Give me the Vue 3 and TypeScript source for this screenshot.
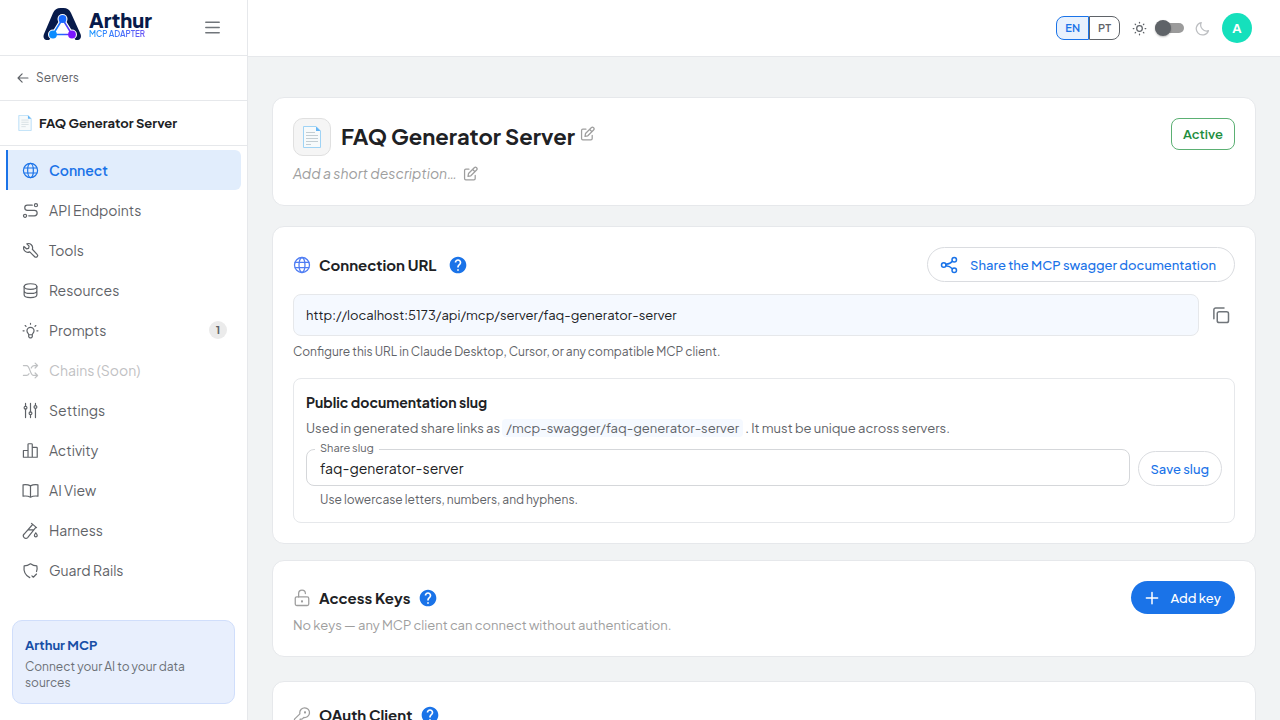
<script setup lang="ts">
import { ref } from 'vue'

interface NavItem {
  label: string
  icon: string
  active?: boolean
  disabled?: boolean
  count?: number
}

const icons: Record<string, string[]> = {
  globe: [
    'M2 12a10 10 0 1 0 20 0a10 10 0 1 0-20 0',
    'M8 12c0 5.5 1.8 10 4 10s4-4.500 4-10s-1.800-10-4-10s-4 4.500-4 10',
    'M3 8.500h18M3 15.500h18',
  ],
  route: [
    'M17.500 4.500a2.200 2.200 0 1 0 4.400 0a2.200 2.200 0 1 0-4.400 0',
    'M2.100 19.500a2.200 2.200 0 1 0 4.400 0a2.200 2.200 0 1 0-4.400 0',
    'M14.500 4.500H7.500a3.600 3.600 0 0 0 0 7.200h10a3.900 3.900 0 0 1 0 7.800H9.500',
  ],
  tool: [
    'M2.700 6.300l3.600 3.300l3-.7l.7-3l-3.200-3.300a6 6 0 0 1 7.800 7.600l6.700 7.200a2.300 2.300 0 0 1-3.400 3.400l-7-6.900a6 6 0 0 1-8.200-7.600z',
  ],
  database: [
    'M3 6.500C3 4 7 2.500 12 2.500s9 1.500 9 4s-4 4-9 4s-9-1.500-9-4z',
    'M3 6.500v11.500c0 2.500 4 4 9 4s9-1.500 9-4V6.500M3 12.200c0 2.500 4 4 9 4s9-1.500 9-4',
  ],
  bulb: [
    'M9.500 18c0-1.500-2.500-2.500-2.500-5.500a5 5 0 1 1 10 0c0 3-2.500 4-2.500 5.500v3l-1.500 1.500h-2l-1.500-1.500zM9.500 18h5',
    'M12 2v1.200M4.500 5l1.200 1.200M19.500 5l-1.200 1.200M1.500 12.500h1.500M21 12.500h1.500',
  ],
  shuffle: [
    'M2 5h4.500c5 0 4.500 14 10 14H22M18.500 15.500L22 19l-3.500 3.500',
    'M2 19h4.500c1.500 0 2.600-1 3.400-2.500M13 8.500C13.800 6.500 15 5 17 5h5M18.500 1.500L22 5l-3.500 3.500',
  ],
  sliders: [
    'M5 2v4M5 10v12M12 2v12M12 18v4M19 10v12M19 2v2',
    'M3 8a2 2 0 1 0 4 0a2 2 0 1 0-4 0M10 16a2 2 0 1 0 4 0a2 2 0 1 0-4 0M17 7a2 2 0 1 0 4 0a2 2 0 1 0-4 0',
  ],
  chart: ['M2 12h6.500v9.500H2zM8.500 3.500q0-1 1-1h4q1 0 1 1v18h-6zM14.500 7.500h6q1 0 1 1v13h-7z'],
  book: ['M12 5.500C9 3.800 5.500 3.500 1.500 4v16c4-.5 7.500-.2 10.500 1.500c3-1.700 6.500-2 10.500-1.500V4c-4-.5-7.500-.2-10.500 1.500zV21'],
  tube: [
    'M13.500 2l7 6M15 3.500L3 17a3.500 3.500 0 0 0 5 5L19.500 7.500M8.500 11h7.500',
    'M19.500 15.500c1.500 1.800 2 2.500 2 3.500a2 2 0 0 1-4 0c0-1 .5-1.700 2-3.500',
  ],
  shield: [
    'M20.500 13.500C21.500 11 21.500 8 21 5.500c-3 0-6-.8-9-3c-3 2.200-6 3-9 3C2 13 4.500 19 11 22',
    'M14 19.500l2 2l4.500-4.500',
  ],
  edit: [
    'M9.500 5H4.500a2 2 0 0 0-2 2v13a2 2 0 0 0 2 2h13a2 2 0 0 0 2-2v-5',
    'M8 16.500l.8-4.500L18 2.800a2.600 2.600 0 0 1 3.700 3.700L12.500 15.700zM15.500 5.500L19 9',
  ],
  share: [
    'M2 12a3 3 0 1 0 6 0a3 3 0 1 0-6 0M16 5a3 3 0 1 0 6 0a3 3 0 1 0-6 0M16 19a3 3 0 1 0 6 0a3 3 0 1 0-6 0',
    'M8 11q6-.5 8.500-4M8 13q5 .5 8.500 4',
  ],
  copy: [
    'M9.500 7.500h10a2.500 2.500 0 0 1 2.500 2.500v9.500a2.500 2.500 0 0 1-2.500 2.500h-10a2.500 2.500 0 0 1-2.500-2.500V10a2.500 2.500 0 0 1 2.500-2.500z',
    'M2.500 17V5a2.500 2.500 0 0 1 2.500-2.500h11',
  ],
  unlock: [
    'M5 10.500h14a2 2 0 0 1 2 2v7.500a2 2 0 0 1-2 2H5a2 2 0 0 1-2-2v-7.500a2 2 0 0 1 2-2z',
    'M7.500 10.500V6a4.500 4.500 0 0 1 9 0M11.500 16h1v1h-1z',
  ],
  key: [
    'M9 9a6.500 6.500 0 1 1 5.500 6.300L12 17.500H9.500V20H7v2H2v-4.500l7.200-7z',
    'M15.500 8h1v1h-1z',
  ],
  plus: ['M12 4.500v15M4.500 12h15'],
  back: ['M20.500 12H3.500M10.500 5l-7 7l7 7'],
  menu: ['M2.500 4.500h19M2.500 12h19M2.500 19.500h19'],
  sun: [
    'M7.500 12a4.500 4.500 0 1 0 9 0a4.500 4.500 0 1 0-9 0',
    'M12 2v1M12 21v1M2 12h1M21 12h1M5 5l.7.7M18.300 18.300l.7.7M5 19l.7-.7M18.300 5.700l.7-.7',
  ],
  moon: ['M10 2.500A10 10 0 1 0 21.500 15.500A9.500 9.500 0 0 1 10 2.500z'],
}

const nav: NavItem[] = [
  { label: 'Connect', icon: 'globe', active: true },
  { label: 'API Endpoints', icon: 'route' },
  { label: 'Tools', icon: 'tool' },
  { label: 'Resources', icon: 'database' },
  { label: 'Prompts', icon: 'bulb', count: 1 },
  { label: 'Chains (Soon)', icon: 'shuffle', disabled: true },
  { label: 'Settings', icon: 'sliders' },
  { label: 'Activity', icon: 'chart' },
  { label: 'AI View', icon: 'book' },
  { label: 'Harness', icon: 'tube' },
  { label: 'Guard Rails', icon: 'shield' },
]

const helpPath =
  'M12 2C6.480 2 2 6.480 2 12s4.480 10 10 10 10-4.480 10-10S17.520 2 12 2m1 17h-2v-2h2zm2.070-7.750-.9.920C13.450 12.900 13 13.500 13 15h-2v-.5c0-1.100.450-2.100 1.170-2.830l1.240-1.260c.370-.360.590-.860.590-1.410 0-1.100-.9-2-2-2s-2 .9-2 2H8c0-2.210 1.790-4 4-4s4 1.790 4 4c0 .880-.360 1.680-.930 2.250'

const slug = ref('faq-generator-server')
const lang = ref('EN')
const dark = ref(false)
</script>

<template>
  <div class="shell">
    <aside class="sidebar">
      <div class="brand-row">
        <div class="brand">
          <svg class="mark" viewBox="0 0 38 32" aria-hidden="true">
            <defs>
              <linearGradient id="net" x1="9" y1="0" x2="29" y2="0" gradientUnits="userSpaceOnUse">
                <stop offset="0" stop-color="#0a8cff" />
                <stop offset=".5" stop-color="#2563ff" />
                <stop offset="1" stop-color="#7b16ff" />
              </linearGradient>
            </defs>
            <path d="M3 32C0 31.500-.5 28.500.5 26L9.500 5C11 1.500 13.500 0 17 0h3c3.500 0 6 1.500 7.500 5l9.500 21c1 2.500.5 5.500-2.500 6z" fill="#071a4a" />
            <path d="M19 11L9.500 26.500h19z" fill="#fff" stroke="#fff" stroke-width="4" stroke-linejoin="round" />
            <path d="M5 33h28l-5-6H9z" fill="#fff" />
            <circle cx="19" cy="11" r="5" fill="#fff" />
            <circle cx="9.500" cy="26.500" r="5" fill="#fff" />
            <circle cx="28.500" cy="26.500" r="5" fill="#fff" />
            <path d="M19 11L9.500 26.500h19z" fill="none" stroke="url(#net)" stroke-width="1.600" />
            <circle cx="19" cy="11" r="3.900" fill="#1769ff" />
            <circle cx="9.500" cy="26.500" r="3.900" fill="#0a8cff" />
            <circle cx="28.500" cy="26.500" r="3.900" fill="#7b16ff" />
          </svg>
          <div class="brand-text">
            <span class="brand-name">Arthur</span>
            <span class="brand-sub">MCP ADAPTER</span>
          </div>
        </div>
        <button class="icon-btn menu-btn" type="button" aria-label="Toggle menu">
          <svg class="ic ic17" viewBox="0 0 24 24"><path v-for="d in icons.menu" :key="d" :d="d" /></svg>
        </button>
      </div>

      <a class="back-row" href="#servers">
        <svg class="ic ic14" viewBox="0 0 24 24"><path v-for="d in icons.back" :key="d" :d="d" /></svg>
        <span>Servers</span>
      </a>

      <div class="server-row">
        <svg class="page-sm" viewBox="0 0 18 22" aria-hidden="true">
          <path d="M.5.500h12.500l4.500 4.500v16.500H.5z" fill="#f7fafb" stroke="#a5d6f5" />
          <path d="M13 .5v4.500h4.500z" fill="#64b5f6" />
          <path d="M4 7h10M4 10h10M4 13h10M4 16h6" stroke="#cfd8dc" />
        </svg>
        <strong>FAQ Generator Server</strong>
      </div>

      <nav class="nav">
        <a
          v-for="item in nav"
          :key="item.label"
          :href="item.disabled ? undefined : '#' + item.icon"
          class="nav-item"
          :class="{ active: item.active, disabled: item.disabled }"
        >
          <svg class="ic ic17" viewBox="0 0 24 24"><path v-for="d in icons[item.icon]" :key="d" :d="d" /></svg>
          <span class="nav-label">{{ item.label }}</span>
          <span v-if="item.count" class="count">{{ item.count }}</span>
        </a>
      </nav>

      <div class="promo">
        <strong>Arthur MCP</strong>
        <p>Connect your AI to your data sources</p>
      </div>
    </aside>

    <div class="body">
      <header class="topbar">
        <div class="lang">
          <button type="button" :class="{ on: lang === 'EN' }" @click="lang = 'EN'">EN</button>
          <button type="button" :class="{ on: lang === 'PT' }" @click="lang = 'PT'">PT</button>
        </div>
        <div class="theme">
          <svg class="ic ic15 sun" viewBox="0 0 24 24"><path v-for="d in icons.sun" :key="d" :d="d" /></svg>
          <input v-model="dark" class="switch" type="checkbox" aria-label="Dark mode" />
          <svg class="ic ic15 moon" viewBox="0 0 24 24"><path v-for="d in icons.moon" :key="d" :d="d" /></svg>
        </div>
        <button class="avatar" type="button">A</button>
      </header>

      <main class="content">
        <section class="card intro">
          <div class="intro-top">
            <div class="page-tile">
              <svg class="page-lg" viewBox="0 0 18 22" aria-hidden="true">
                <path d="M.5.500h12.500l4.500 4.500v16.500H.5z" fill="#f7fafb" stroke="#9fd3f5" />
                <path d="M13 .5v4.500h4.500z" fill="#64b5f6" />
                <path d="M3 6.500h9M3 9.500h12M3 12.500h12M3 15.500h12M3 18.500h5" stroke="#c3cdd2" />
              </svg>
            </div>
            <h1>FAQ Generator Server</h1>
            <button class="icon-btn title-edit" type="button" aria-label="Edit name">
              <svg class="ic ic15" viewBox="0 0 24 24"><path v-for="d in icons.edit" :key="d" :d="d" /></svg>
            </button>
            <span class="status">Active</span>
          </div>
          <div class="intro-desc">
            <em>Add a short description…</em>
            <button class="icon-btn" type="button" aria-label="Edit description">
              <svg class="ic ic15" viewBox="0 0 24 24"><path v-for="d in icons.edit" :key="d" :d="d" /></svg>
            </button>
          </div>
        </section>

        <section class="card connection">
          <div class="card-head">
            <svg class="ic ic18 blue-soft" viewBox="0 0 24 24"><path v-for="d in icons.globe" :key="d" :d="d" /></svg>
            <h2>Connection URL</h2>
            <button class="icon-btn help wide-help" type="button" aria-label="Help">
              <svg viewBox="0 0 24 24"><path :d="helpPath" /></svg>
            </button>
            <button class="pill share" type="button">
              <svg class="ic ic18" viewBox="0 0 24 24"><path v-for="d in icons.share" :key="d" :d="d" /></svg>
              <span>Share the MCP swagger documentation</span>
            </button>
          </div>
          <div class="url-row">
            <div class="url">http://localhost:5173/api/mcp/server/faq-generator-server</div>
            <button class="icon-btn copy" type="button" aria-label="Copy URL">
              <svg class="ic ic18" viewBox="0 0 24 24"><path v-for="d in icons.copy" :key="d" :d="d" /></svg>
            </button>
          </div>
          <p class="url-hint">Configure this URL in Claude Desktop, Cursor, or any compatible MCP client.</p>

          <div class="panel">
            <h3>Public documentation slug</h3>
            <p class="panel-text">
              Used in generated share links as <code>/mcp-swagger/faq-generator-server</code> . It must be unique across servers.
            </p>
            <div class="slug-row">
              <div class="field">
                <label for="slug">Share slug</label>
                <input id="slug" v-model="slug" type="text" />
              </div>
              <button class="pill save" type="button">Save slug</button>
            </div>
            <p class="slug-hint">Use lowercase letters, numbers, and hyphens.</p>
          </div>
        </section>

        <section class="card keys">
          <div class="card-head">
            <svg class="ic ic18 muted" viewBox="0 0 24 24"><path v-for="d in icons.unlock" :key="d" :d="d" /></svg>
            <h2>Access Keys</h2>
            <button class="icon-btn help" type="button" aria-label="Help">
              <svg viewBox="0 0 24 24"><path :d="helpPath" /></svg>
            </button>
            <button class="add" type="button">
              <svg class="ic ic18" viewBox="0 0 24 24"><path v-for="d in icons.plus" :key="d" :d="d" /></svg>
              <span>Add key</span>
            </button>
          </div>
          <p class="empty">No keys — any MCP client can connect without authentication.</p>
        </section>

        <section class="card oauth">
          <div class="card-head">
            <svg class="ic ic18 muted" viewBox="0 0 24 24"><path v-for="d in icons.key" :key="d" :d="d" /></svg>
            <h2>OAuth Client</h2>
            <button class="icon-btn help" type="button" aria-label="Help">
              <svg viewBox="0 0 24 24"><path :d="helpPath" /></svg>
            </button>
          </div>
        </section>
      </main>
    </div>
  </div>
</template>

<style>
body {
  background: #f1f3f4;
}
</style>

<style scoped>
* {
  box-sizing: border-box;
}
.shell {
  display: flex;
  height: 100vh;
  overflow: hidden;
  font-family: 'Plus Jakarta Sans', Inter, 'Liberation Sans', sans-serif;
  font-size: 14px;
  line-height: 20px;
  color: #202124;
}
button,
input {
  font: inherit;
}
button {
  cursor: pointer;
}
h1, h2, h3, p {
  margin: 0;
}
.ic {
  flex: none;
  fill: none;
  stroke: currentColor;
  stroke-width: 1.700;
  stroke-linecap: round;
  stroke-linejoin: round;
}
.ic14 { width: 14px; height: 14px; stroke-width: 2; }
.ic15 { width: 15px; height: 15px; stroke-width: 2; }
.ic17 { width: 17px; height: 17px; }
.ic18 { width: 18px; height: 18px; }
.icon-btn {
  display: inline-flex;
  align-items: center;
  justify-content: center;
  padding: 0;
  border: 0;
  background: none;
  color: #9e9e9e;
}

.sidebar {
  display: flex;
  flex-direction: column;
  flex: none;
  width: 248px;
  background: #fff;
  border-right: 1px solid #e6e8eb;
}
.brand-row {
  display: flex;
  align-items: center;
  justify-content: space-between;
  height: 56px;
  padding: 0 25px 0 43px;
  border-bottom: 1px solid #e6e8eb;
}
.brand {
  display: flex;
  align-items: center;
  gap: 7px;
  padding-bottom: 8px;
}
.mark {
  width: 39px;
  height: 32px;
}
.brand-text {
  display: flex;
  flex-direction: column;
}
.brand-name {
  font-size: 20px;
  line-height: 20px;
  font-weight: 800;
  color: #071a4a;
}
.brand-sub {
  font-size: 8px;
  line-height: 8px;
  font-weight: 600;
  color: transparent;
  background: linear-gradient(90deg, #1d9bff, #7048f5);
  background-clip: text;
}
.menu-btn {
  width: 20px;
  height: 20px;
  color: #70757a;
}
.menu-btn .ic {
  stroke-width: 2;
}
.back-row {
  display: flex;
  align-items: center;
  gap: 6px;
  height: 45px;
  padding: 0 16px;
  border-bottom: 1px solid #e6e8eb;
  font-size: 12px;
  color: #5f6368;
  text-decoration: none;
}
.server-row {
  display: flex;
  align-items: center;
  gap: 7px;
  height: 45px;
  padding: 0 18px;
  border-bottom: 1px solid #e6e8eb;
  font-size: 13px;
}
.server-row strong {
  font-weight: 700;
}
.page-sm {
  width: 14px;
  height: 16px;
}
.nav {
  display: flex;
  flex-direction: column;
  padding: 4px 6px;
}
.nav-item {
  display: flex;
  align-items: center;
  gap: 10px;
  height: 40px;
  padding: 0 14px;
  border-left: 2px solid transparent;
  border-radius: 0 6px 6px 0;
  color: #5f6368;
  text-decoration: none;
}
.nav-item.active {
  border-left-color: #1a73e8;
  background: #e1edfc;
  color: #1a73e8;
  font-weight: 600;
}
.nav-item.disabled {
  color: #bfc1c3;
}
.nav-label {
  flex: 1;
}
.count {
  min-width: 18px;
  height: 18px;
  border-radius: 9px;
  background: #ebebeb;
  font-size: 11px;
  line-height: 18px;
  font-weight: 700;
  text-align: center;
}
.promo {
  margin: auto 12px 16px;
  padding: 14px 12px 12px;
  border: 1px solid #d0defb;
  border-radius: 10px;
  background: #e8effd;
}
.promo strong {
  display: block;
  font-size: 13px;
  line-height: 20px;
  color: #174ea6;
}
.promo p {
  margin-top: 4px;
  font-size: 12px;
  line-height: 16px;
  color: #6b7076;
}

.body {
  display: flex;
  flex-direction: column;
  flex: 1;
  min-width: 0;
}
.topbar {
  display: flex;
  flex: none;
  align-items: center;
  justify-content: flex-end;
  gap: 12px;
  height: 57px;
  padding: 0 28px;
  border-bottom: 1px solid #e6e8eb;
  background: #fff;
}
.lang {
  display: flex;
}
.lang button {
  height: 24px;
  padding: 0 8px;
  border: 1px solid #5f6368;
  background: #fff;
  color: #5f6368;
  font-size: 11px;
  font-weight: 600;
}
.lang button:first-child {
  border-radius: 8px 0 0 8px;
}
.lang button:last-child {
  border-radius: 0 8px 8px 0;
}
.lang .on {
  border-color: #1a73e8;
  background: #e8f1fd;
  color: #1a73e8;
}
.theme {
  display: flex;
  align-items: center;
  gap: 8px;
  color: #5f6368;
}
.moon {
  margin-left: 3px;
  color: #bdbfc2;
}
.switch {
  display: flex;
  align-items: center;
  appearance: none;
  width: 29px;
  height: 10px;
  margin: 0;
  border-radius: 5px;
  background: #9b9b9b;
}
.switch::before {
  content: '';
  width: 16px;
  height: 16px;
  border-radius: 50%;
  background: #5f6368;
  box-shadow: 0 1px 2px #0004;
}
.switch:checked::before {
  margin-left: auto;
}
.avatar {
  width: 30px;
  height: 30px;
  padding: 0;
  border: 0;
  border-radius: 50%;
  background: #15e0bc;
  color: #fff;
  font-size: 13px;
  font-weight: 700;
}

.content {
  flex: 1;
  min-height: 0;
  padding: 40px 24px 24px;
  overflow-y: auto;
  scrollbar-width: none;
  background: #f1f3f4;
}
.card {
  padding: 20px;
  border: 1px solid #e6e8eb;
  border-radius: 12px;
  background: #fff;
}
.intro-top {
  display: flex;
  align-items: flex-start;
}
.page-tile {
  display: flex;
  align-items: center;
  justify-content: center;
  width: 38px;
  height: 38px;
  margin-right: 10px;
  border: 1px solid #e0e0e0;
  border-radius: 10px;
  background: #f5f5f5;
}
.page-lg {
  width: 18px;
  height: 22px;
}
h1 {
  font-size: 22px;
  line-height: 36px;
  font-weight: 700;
}
.title-edit {
  height: 30px;
  margin-left: 5px;
}
.status {
  margin-left: auto;
  padding: 0 11px;
  border: 1px solid #5bb073;
  border-radius: 8px;
  font-size: 13px;
  line-height: 30px;
  font-weight: 600;
  color: #1e8e3e;
}
.intro-desc {
  display: flex;
  align-items: center;
  gap: 6px;
  margin: 7px 0 2px;
  color: #9e9e9e;
}
.connection {
  margin-top: 20px;
}
.card-head {
  display: flex;
  align-items: center;
  gap: 8px;
}
h2 {
  font-size: 15px;
  line-height: 26px;
  font-weight: 700;
}
.blue-soft {
  color: #4f7df3;
}
.muted {
  color: #9e9e9e;
}
.help svg {
  width: 20px;
  height: 20px;
  fill: #1a73e8;
}
.wide-help {
  margin-left: 4px;
}
.pill {
  display: flex;
  align-items: center;
  justify-content: center;
  height: 35px;
  border: 1px solid #dadce0;
  border-radius: 18px;
  background: #fff;
  color: #1a73e8;
  font-size: 13px;
  font-weight: 500;
}
.share {
  gap: 12px;
  margin-left: auto;
  padding: 0 18px 0 12px;
}
.share .ic,
.add .ic,
.copy .ic {
  stroke-width: 2;
}
.url-row {
  display: flex;
  gap: 8px;
  margin-top: 12px;
}
.url {
  flex: 1;
  padding: 0 12px;
  border: 1px solid #e6e8eb;
  border-radius: 8px;
  background: #f5f9ff;
  font-size: 13px;
  line-height: 40px;
}
.copy {
  width: 28px;
  color: #70757a;
}
.url-hint {
  margin-top: 6px;
  font-size: 12px;
  line-height: 20px;
  color: #5f6368;
}
.panel {
  margin-top: 16px;
  padding: 12px;
  border: 1px solid #e6e8eb;
  border-radius: 8px;
}
h3 {
  font-size: 14px;
  line-height: 22px;
  font-weight: 700;
}
.panel-text {
  margin-top: 2px;
  font-size: 13px;
  line-height: 26px;
  color: #5f6368;
}
.panel-text code {
  padding: 1px 4px;
  border-radius: 4px;
  background: #f5f9ff;
  font-family: inherit;
}
.slug-row {
  display: flex;
  align-items: flex-end;
  gap: 8px;
  margin-top: 8px;
}
.field {
  position: relative;
  flex: 1;
}
.field label {
  position: absolute;
  top: -8px;
  left: 9px;
  padding: 0 5px;
  background: #fff;
  font-size: 11px;
  line-height: 14px;
  color: #5f6368;
}
.field input {
  display: block;
  width: 100%;
  height: 37px;
  padding: 0 13px;
  border: 1px solid #d5d7da;
  border-radius: 8px;
  background: #fff;
  color: #202124;
}
.save {
  padding: 0 12px;
}
.slug-hint {
  margin-top: 4px;
  padding-left: 14px;
  font-size: 12px;
  line-height: 20px;
  color: #5f6368;
}
.keys {
  margin-top: 16px;
}
.add {
  display: flex;
  align-items: center;
  gap: 10px;
  height: 33px;
  margin-left: auto;
  padding: 0 14px 0 12px;
  border: 0;
  border-radius: 17px;
  background: #1a73e8;
  color: #fff;
  font-size: 13px;
  font-weight: 500;
}
.empty {
  margin-top: 1px;
  font-size: 13px;
  line-height: 21px;
  color: #9e9e9e;
}
.oauth {
  margin-top: 24px;
}
</style>
